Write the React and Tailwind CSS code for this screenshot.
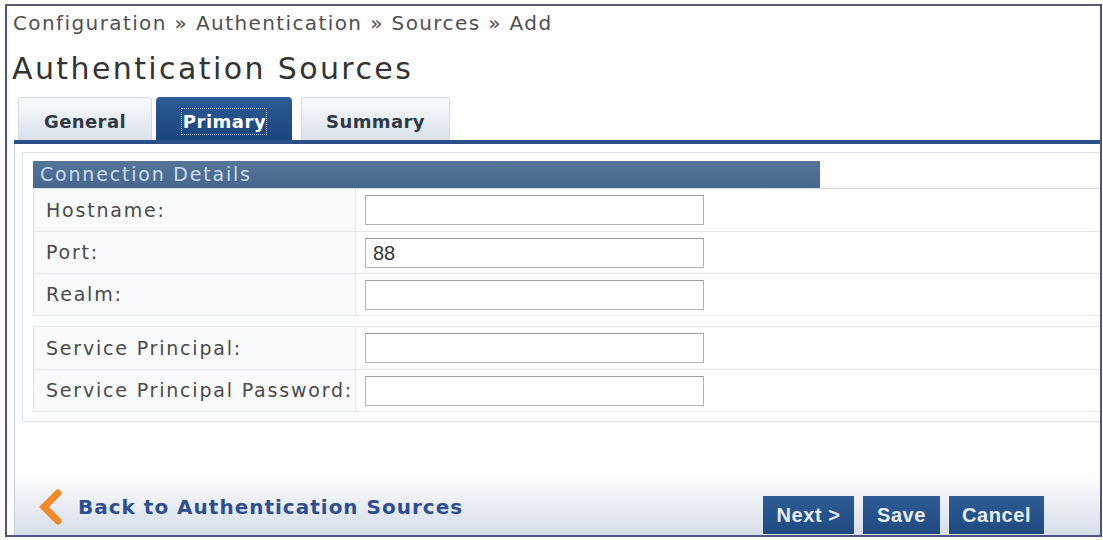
import { useState } from 'react'

const primaryRows = [
  { label: 'Hostname:', value: '' },
  { label: 'Port:', value: '88' },
  { label: 'Realm:', value: '' },
]

const principalRows = [
  { label: 'Service Principal:', value: '' },
  { label: 'Service Principal Password:', value: '', type: 'password' },
]

function FieldRow({ label, value, type, first }) {
  return (
    <div className={`flex h-[42px] ${first ? '' : 'border-t border-[#e2e7ee]'}`}>
      <div className="w-[322px] shrink-0 bg-[#f9fafc] border-r border-[#e2e7ee] pl-3 flex items-center text-[19px] tracking-[1.8px] text-[#4a4a4a]">
        {label}
      </div>
      <div className="flex-1 flex items-center pl-[9px]">
        <input
          type={type || 'text'}
          defaultValue={value}
          className="w-[339px] h-[30px] bg-white border border-[#b4b4b4] border-t-[#9c9c9c] px-[7px] text-[20px] text-[#333] font-['Liberation_Sans',Arial,sans-serif] outline-none"
        />
      </div>
    </div>
  )
}

function Tab({ label, active, width }) {
  if (active) {
    return (
      <div className={`${width} h-[43px] rounded-t-[4px] bg-gradient-to-b from-[#2d5b97] to-[#1b457f] flex items-end justify-center pb-[5px]`}>
        <span className="pl-[1px] leading-[25px] border border-dotted border-[#c8d4e6] text-white font-bold text-[18px] tracking-[0.5px]">{label}</span>
      </div>
    )
  }
  return (
    <div className={`${width} h-[43px] rounded-t-[4px] border border-b-0 border-[#d3dbe5] bg-gradient-to-b from-[#fbfcfd] to-[#d8e1eb] flex items-end justify-center pb-[6px]`}>
      <span className="leading-[25px] text-[#2f3a48] font-bold text-[18px] tracking-[0.4px]">{label}</span>
    </div>
  )
}

export default function App() {
  const [tab] = useState('Primary')

  return (
    <div className="w-[1103px] h-[540px] bg-white pl-[5px] pt-[4px] pr-[1px] pb-[3px] font-['DejaVu_Sans',Verdana,sans-serif]">
      <div className="h-full border-2 border-[#4a5290] border-t-[#5a5a72] flex flex-col">
        {/* breadcrumb + page title */}
        <div className="h-[33px] flex items-center pl-[6px] text-[20px] tracking-[1.4px] text-[#505050]">
          Configuration » Authentication » Sources » Add
        </div>
        <div className="h-[58px] flex items-center pl-[5px] text-[30px] tracking-[2.4px] text-[#333]">
          Authentication Sources
        </div>

        <div className="ml-[7px] flex-1 flex flex-col">
          {/* tabs */}
          <div className="flex items-end pl-[4px] gap-[4px]">
            <Tab label="General" width="w-[134px]" active={tab === 'General'} />
            <Tab label="Primary" width="w-[136px]" active={tab === 'Primary'} />
            <div className="w-[1px]" />
            <Tab label="Summary" width="w-[149px]" active={tab === 'Summary'} />
          </div>
          <div className="h-[4px] bg-[#2b4f87]" />

          <div className="flex-1 flex flex-col border-l border-[#c5cfdd]">
            <div className="flex-1 pt-[8px] pl-[7px]">
              <div className="border border-r-0 border-[#dde3ea] pt-[8px] pl-[10px] pb-[9px]">
                <div className="flex border-b border-[#d7dde5]">
                  <div className="w-[787px] h-[27px] bg-gradient-to-b from-[#557699] to-[#46678c] pl-[7px] flex items-center text-[19px] tracking-[1.8px] text-[#c9dcf1]">
                    Connection Details
                  </div>
                </div>
                <div className="border-l border-[#e2e7ee]">
                  {primaryRows.map((r, i) => (
                    <FieldRow key={r.label} {...r} first={i === 0} />
                  ))}
                </div>
                <div className="h-[12px] border-t border-b border-[#e2e7ee]" />
                <div className="border-l border-b border-[#e2e7ee]">
                  {principalRows.map((r, i) => (
                    <FieldRow key={r.label} {...r} first={i === 0} />
                  ))}
                </div>
              </div>
            </div>

            {/* footer bar */}
            <div className="h-[58px] bg-gradient-to-b from-[#fdfdfe] to-[#d5dee9] flex items-end justify-between pl-[21px] pr-[56px] pb-[1px]">
              <a href="#" className="self-center mt-[2px] flex items-center gap-[14px] text-[20px] tracking-[1px] font-bold text-[#2f4e92]">
                <svg width="28" height="36" viewBox="0 0 28 36">
                  <path d="M22 4 L8 18 L22 32" fill="none" stroke="#f28a2a" strokeWidth="7" strokeLinecap="round" strokeLinejoin="miter" />
                </svg>
                Back to Authentication Sources
              </a>
              <div className="flex gap-[9px] font-['Liberation_Sans',Arial,sans-serif] text-[20px] tracking-[0.6px] font-bold text-[#e8eef6]">
                <button className="w-[91px] h-[38px] bg-gradient-to-b from-[#2e5c97] to-[#1f4a80]">Next &gt;</button>
                <button className="w-[77px] h-[38px] bg-gradient-to-b from-[#2e5c97] to-[#1f4a80]">Save</button>
                <button className="w-[95px] h-[38px] bg-gradient-to-b from-[#2e5c97] to-[#1f4a80]">Cancel</button>
              </div>
            </div>
          </div>
        </div>
      </div>
    </div>
  )
}
